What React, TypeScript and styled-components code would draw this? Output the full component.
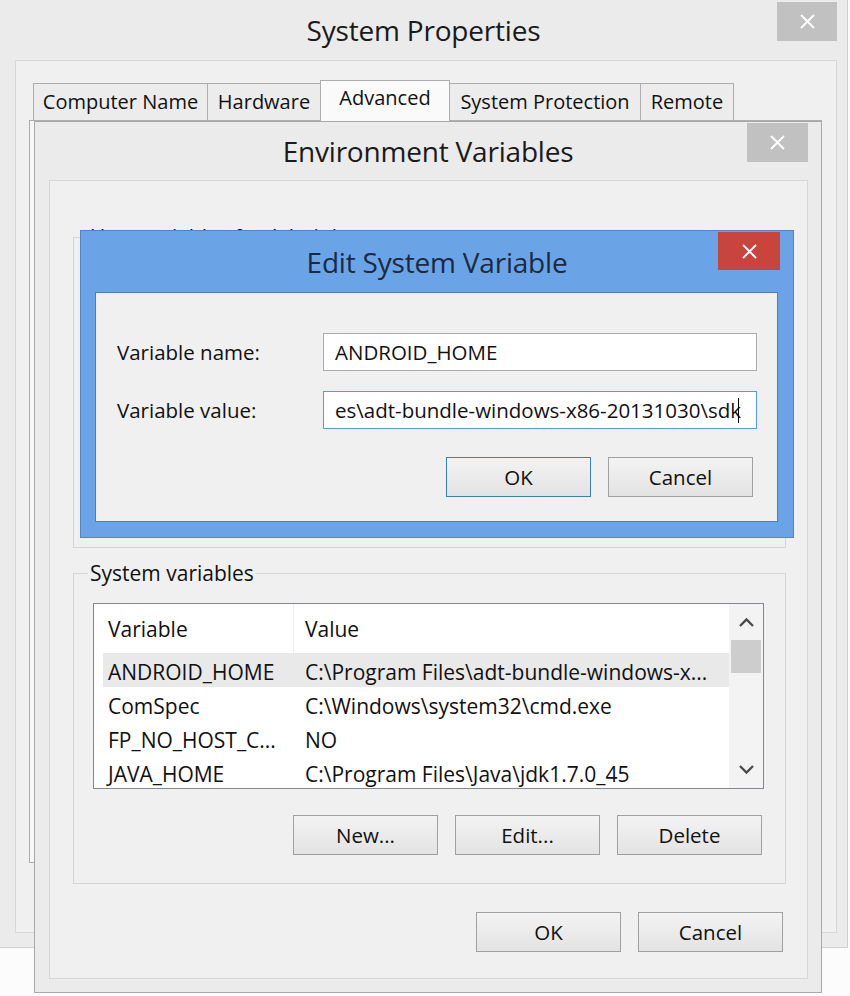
import styled, { createGlobalStyle } from 'styled-components';

const GlobalStyle = createGlobalStyle`
  html, body {
    margin: 0;
    padding: 0;
    background: #fcfcfc;
  }
  body {
    font-family: "Open Sans", "Noto Sans", "Liberation Sans", sans-serif;
    color: #111;
  }
  * {
    box-sizing: border-box;
  }
`;

const Desktop = styled.div`
  position: relative;
  width: 850px;
  height: 996px;
  overflow: hidden;
  background: #fcfcfc;
`;

// windows sit on a free desktop, so their place is absolute
const Window = styled.div<{ $left: number; $top: number; $width: number; $height: number; $tone: 'inactive' | 'active' }>`
  position: absolute;
  left: ${p => p.$left}px;
  top: ${p => p.$top}px;
  width: ${p => p.$width}px;
  height: ${p => p.$height}px;
  display: flex;
  flex-direction: column;
  background: ${p => (p.$tone === 'active' ? '#6aa4e7' : '#ebebeb')};
  border: 1px solid ${p => (p.$tone === 'active' ? '#4f86c9' : '#a9a9a9')};
`;

const SysWindow = styled(Window)`
  border-left: none;
  border-top: none;
  border-color: #cfcfcf;
`;

const TitleBar = styled.div<{ $height: number; $dark?: boolean }>`
  position: relative;
  height: ${p => p.$height}px;
  flex-shrink: 0;
  display: flex;
  align-items: center;
  justify-content: center;
  font-size: 28px;
  color: ${p => (p.$dark ? '#1b2a40' : '#1a1a1a')};
  letter-spacing: -0.2px;
`;

const CloseButton = styled.div<{ $right: number; $top: number; $width: number; $height: number; $red?: boolean }>`
  position: absolute;
  right: ${p => p.$right}px;
  top: ${p => p.$top}px;
  width: ${p => p.$width}px;
  height: ${p => p.$height}px;
  display: flex;
  align-items: center;
  justify-content: center;
  background: ${p => (p.$red ? '#c8453e' : '#c1c1c1')};
`;

const Panel = styled.div<{ $blue?: boolean }>`
  flex: 1;
  display: flex;
  flex-direction: column;
  background: #f0f0f0;
  border: 1px solid ${p => (p.$blue ? '#4a7ec0' : '#d7d7d7')};
`;

const SysPanel = styled(Panel)`
  margin: 0 10px 14px 15px;
  padding: 19px 0 0 13px;
`;

const TabStrip = styled.div`
  display: flex;
  align-items: flex-end;
  padding-left: 4px;
  position: relative;
  z-index: 1;
`;

const Tab = styled.div<{ $width: number; $selected?: boolean }>`
  width: ${p => p.$width}px;
  height: ${p => (p.$selected ? 41 : 37)}px;
  margin-right: -1px;
  margin-bottom: ${p => (p.$selected ? -1 : 0)}px;
  display: flex;
  align-items: center;
  justify-content: center;
  padding-bottom: ${p => (p.$selected ? 7 : 2)}px;
  border: 1px solid #adadad;
  border-bottom: none;
  background: ${p => (p.$selected ? '#fafafa' : '#ececec')};
  font-size: 20px;
  color: #111;
`;

const TabPage = styled.div`
  width: 793px;
  height: 743px;
  border: 1px solid #adadad;
  background: #f7f7f7;
`;

const EnvPanel = styled(Panel)`
  margin: 0 13px 13px 14px;
  padding: 56px 21px 0 23px;
`;

const GroupBox = styled.div<{ $height?: number }>`
  position: relative;
  border: 1px solid #d5d5d5;
  ${p => (p.$height ? `height: ${p.$height}px;` : '')}
  padding: 29px 21px 28px 19px;
`;

const GroupCaption = styled.span`
  position: absolute;
  top: -13px;
  left: 14px;
  padding: 0 2px;
  background: #f0f0f0;
  font-size: 21px;
  line-height: 24px;
`;

const SystemGroup = styled(GroupBox)`
  margin-top: 25px;
`;

const ListBox = styled.div`
  height: 186px;
  display: flex;
  border: 1px solid #828790;
  background: #fff;
  overflow: hidden;
`;

const ListMain = styled.div`
  flex: 1;
  display: flex;
  flex-direction: column;
  overflow: hidden;
`;

const ListHeader = styled.div`
  height: 49px;
  flex-shrink: 0;
  display: flex;
  align-items: center;
  font-size: 21px;
`;

const HeaderCell = styled.div<{ $width?: number; $pad: number }>`
  ${p => (p.$width ? `width: ${p.$width}px;` : 'flex: 1;')}
  height: 100%;
  display: flex;
  align-items: center;
  padding-left: ${p => p.$pad}px;
  ${p => (p.$width ? 'border-right: 1px solid #ececec;' : '')}
`;

const Row = styled.div<{ $selected?: boolean }>`
  height: 34px;
  flex-shrink: 0;
  margin-left: 9px;
  padding-top: 3px;
  display: flex;
  align-items: center;
  font-size: 21px;
  white-space: nowrap;
  background: ${p => (p.$selected ? '#e9e9e9' : 'transparent')};
`;

const Cell = styled.div<{ $width?: number; $pad: number }>`
  ${p => (p.$width ? `width: ${p.$width}px;` : 'flex: 1;')}
  padding-left: ${p => p.$pad}px;
  overflow: hidden;
`;

const ScrollBar = styled.div`
  width: 34px;
  display: flex;
  flex-direction: column;
  background: #f3f3f3;
`;

const ScrollArrow = styled.div`
  height: 36px;
  display: flex;
  align-items: center;
  justify-content: center;
`;

const ScrollTrack = styled.div`
  flex: 1;
  padding: 0 2px;
`;

const Thumb = styled.div`
  height: 33px;
  background: #cdcdcd;
`;

const ButtonRow = styled.div<{ $top: number; $right: number }>`
  display: flex;
  justify-content: flex-end;
  gap: 17px;
  margin-top: ${p => p.$top}px;
  padding-right: ${p => p.$right}px;
`;

const Button = styled.div<{ $default?: boolean }>`
  width: 145px;
  height: 40px;
  display: flex;
  align-items: center;
  justify-content: center;
  border: 1px solid ${p => (p.$default ? '#3c7fb1' : '#a0a0a0')};
  background: linear-gradient(#f3f3f3, #e3e3e3);
  font-size: 20.5px;
  color: #111;
`;

const EditPanel = styled(Panel)`
  margin: 0 15px 15px 14px;
  padding: 40px 20px 0 21px;
`;

const Form = styled.div`
  display: grid;
  grid-template-columns: 206px 1fr;
  row-gap: 20px;
  align-items: center;
`;

const FieldLabel = styled.div`
  font-size: 20.5px;
`;

const TextBox = styled.div<{ $focused?: boolean }>`
  height: 38px;
  display: flex;
  align-items: center;
  padding-left: 11px;
  overflow: hidden;
  white-space: nowrap;
  background: #fff;
  border: 1px solid ${p => (p.$focused ? '#569de5' : '#abadb3')};
  font-size: 20.5px;
`;

const Caret = styled.span`
  display: inline-block;
  width: 0;
  height: 25px;
  margin-left: -3px;
  border-left: 1.5px solid #000;
`;

const CloseGlyph = () => (
  <svg width="17" height="17" viewBox="0 0 17 17">
    <path d="M2 2 L15 15 M15 2 L2 15" stroke="#fff" strokeWidth="1.9" fill="none" />
  </svg>
);

const Chevron = ({ up }: { up?: boolean }) => (
  <svg width="15" height="10" viewBox="0 0 15 10">
    <polyline
      points={up ? '1,9 7.5,2.5 14,9' : '1,1 7.5,7.5 14,1'}
      stroke="#4a4a4a"
      strokeWidth="2.3"
      fill="none"
    />
  </svg>
);

const tabs = [
  { label: 'Computer Name', width: 175 },
  { label: 'Hardware', width: 114 },
  { label: 'Advanced', width: 130, selected: true },
  { label: 'System Protection', width: 192 },
  { label: 'Remote', width: 94 },
];

const systemVars = [
  { name: 'ANDROID_HOME', value: 'C:\\Program Files\\adt-bundle-windows-x...', selected: true },
  { name: 'ComSpec', value: 'C:\\Windows\\system32\\cmd.exe' },
  { name: 'FP_NO_HOST_C...', value: 'NO' },
  { name: 'JAVA_HOME', value: 'C:\\Program Files\\Java\\jdk1.7.0_45' },
];

export default function App() {
  return (
    <Desktop>
      <GlobalStyle />

      {/* System Properties */}
      <SysWindow $left={0} $top={0} $width={848} $height={948} $tone="inactive">
        <TitleBar $height={60}>
          System Properties
          <CloseButton $right={10} $top={2} $width={60} $height={39}>
            <CloseGlyph />
          </CloseButton>
        </TitleBar>
        <SysPanel>
          <TabStrip>
            {tabs.map(t => (
              <Tab key={t.label} $width={t.width} $selected={t.selected}>
                {t.label}
              </Tab>
            ))}
          </TabStrip>
          <TabPage />
        </SysPanel>
      </SysWindow>

      {/* Environment Variables */}
      <Window $left={34} $top={121} $width={788} $height={872} $tone="inactive">
        <TitleBar $height={58}>
          Environment Variables
          <CloseButton $right={13} $top={1} $width={61} $height={39}>
            <CloseGlyph />
          </CloseButton>
        </TitleBar>
        <EnvPanel>
          <GroupBox $height={311}>
            <GroupCaption>User variables for Administrator</GroupCaption>
          </GroupBox>
          <SystemGroup>
            <GroupCaption>System variables</GroupCaption>
            <ListBox>
              <ListMain>
                <ListHeader>
                  <HeaderCell $width={200} $pad={14}>Variable</HeaderCell>
                  <HeaderCell $pad={11}>Value</HeaderCell>
                </ListHeader>
                {systemVars.map(v => (
                  <Row key={v.name} $selected={v.selected}>
                    <Cell $width={191} $pad={5}>{v.name}</Cell>
                    <Cell $pad={11}>{v.value}</Cell>
                  </Row>
                ))}
              </ListMain>
              <ScrollBar>
                <ScrollArrow>
                  <Chevron up />
                </ScrollArrow>
                <ScrollTrack>
                  <Thumb />
                </ScrollTrack>
                <ScrollArrow>
                  <Chevron />
                </ScrollArrow>
              </ScrollBar>
            </ListBox>
            <ButtonRow $top={26} $right={2}>
              <Button>New...</Button>
              <Button>Edit...</Button>
              <Button>Delete</Button>
            </ButtonRow>
          </SystemGroup>
          <ButtonRow $top={28} $right={3}>
            <Button>OK</Button>
            <Button>Cancel</Button>
          </ButtonRow>
        </EnvPanel>
      </Window>

      {/* Edit System Variable */}
      <Window $left={80} $top={230} $width={714} $height={308} $tone="active">
        <TitleBar $height={61} $dark>
          Edit System Variable
          <CloseButton $right={13} $top={1} $width={62} $height={38} $red>
            <CloseGlyph />
          </CloseButton>
        </TitleBar>
        <EditPanel $blue>
          <Form>
            <FieldLabel>Variable name:</FieldLabel>
            <TextBox>ANDROID_HOME</TextBox>
            <FieldLabel>Variable value:</FieldLabel>
            <TextBox $focused>
              es\adt-bundle-windows-x86-20131030\sdk
              <Caret />
            </TextBox>
          </Form>
          <ButtonRow $top={28} $right={4}>
            <Button $default>OK</Button>
            <Button>Cancel</Button>
          </ButtonRow>
        </EditPanel>
      </Window>
    </Desktop>
  );
}
